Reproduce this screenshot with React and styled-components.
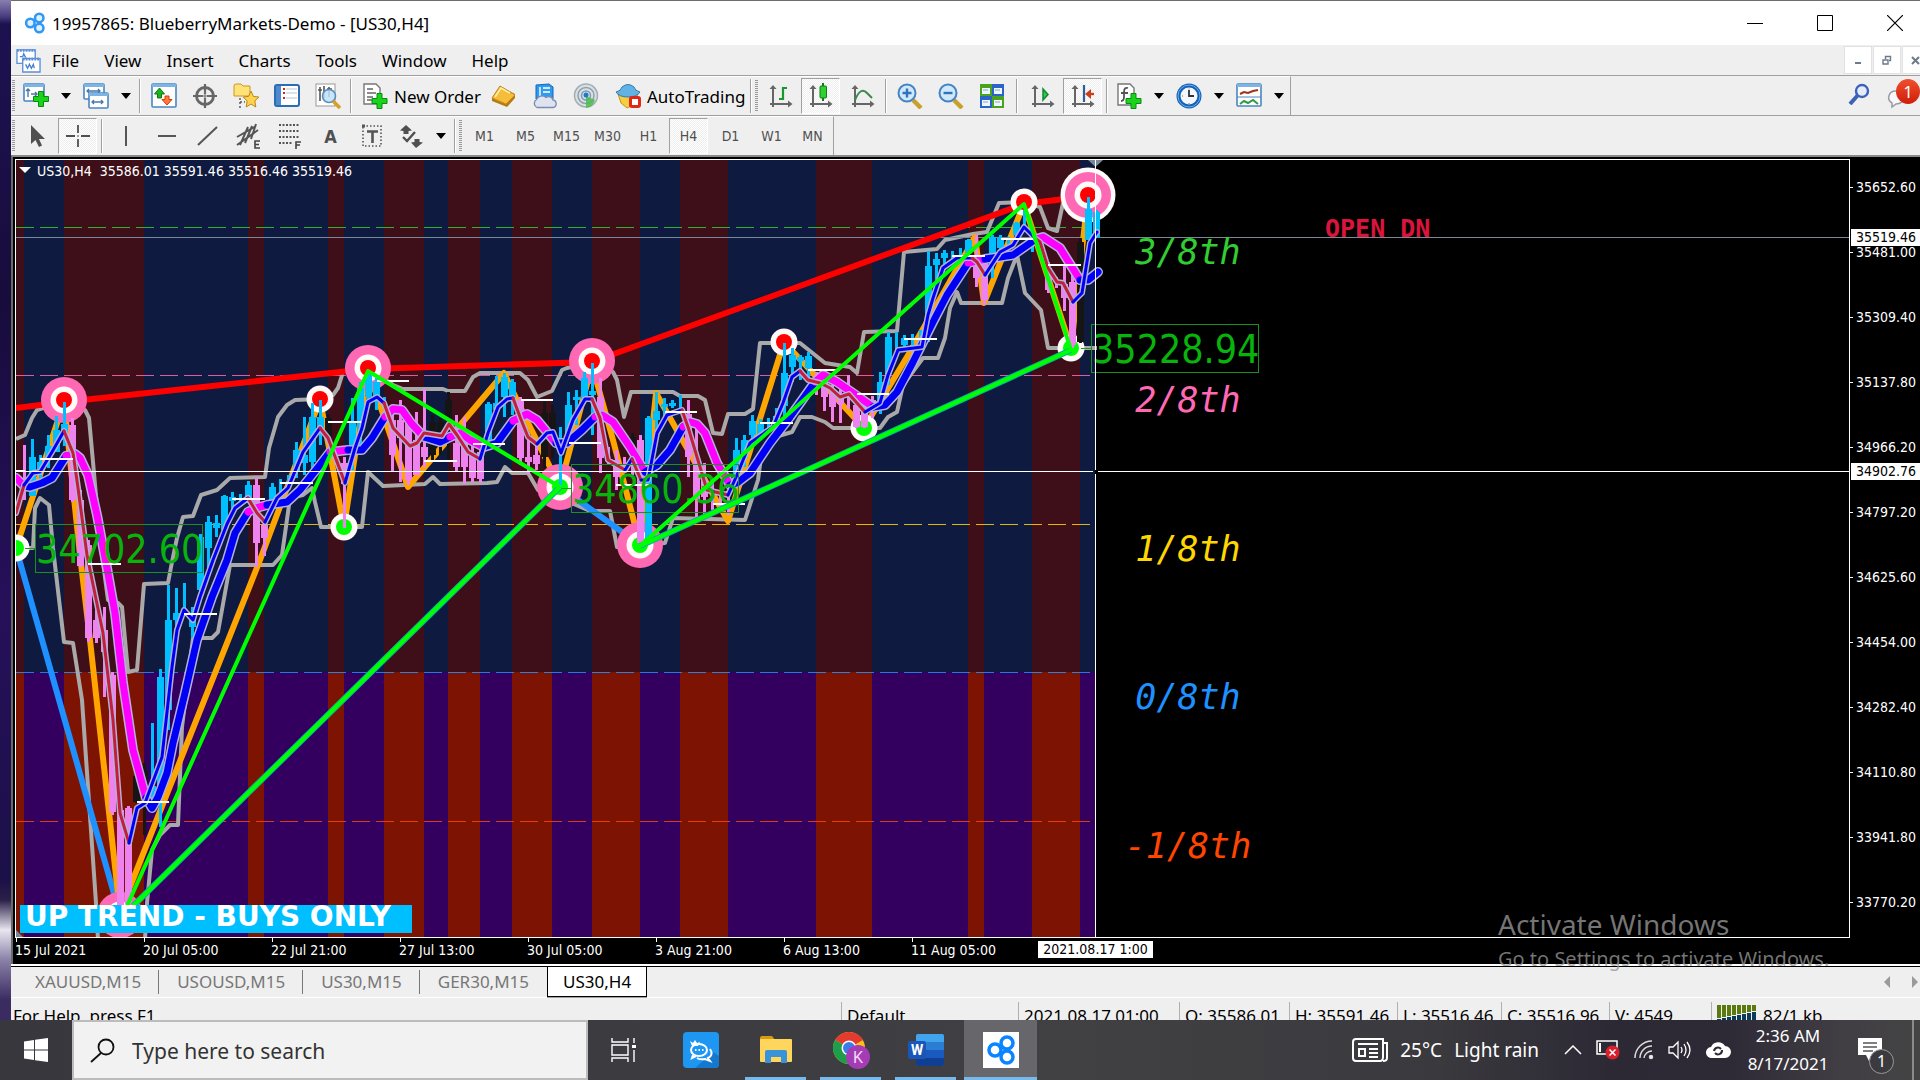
import React from "react";
import styled, { createGlobalStyle } from "styled-components";

const ui = '"Noto Sans", "Open Sans", sans-serif';
const tahoma = '"DejaVu Sans Condensed", "Noto Sans", sans-serif';

const GlobalStyle = createGlobalStyle`
  *, *::before, *::after { box-sizing: border-box; }
  body { margin: 0; overflow: hidden; background: #1d0f45; }
  button, input { font: inherit; color: inherit; border: 0; background: none; padding: 0; margin: 0; border-radius: 0; }
  ul { list-style: none; margin: 0; padding: 0; }
  svg { display: block; flex: none; }
`;

/* ---------- shell ---------- */
const Screen = styled.div`
  height: 100vh;
  display: flex;
  flex-direction: column;
  overflow: hidden;
  font-family: ${ui};
  font-size: 17px;
  color: #000;
  background: linear-gradient(#8a7fb0 0, #4a3f80 16px, #1d1250 24px, #180c3c 300px, #26105a 600px, #1c1048 880px, #2a2048 900px, #e8e6f0 930px, #8a80a8 960px, #3a2c60 1000px);
`;
const AppWindow = styled.main`
  flex: 1;
  min-height: 0;
  margin-left: 11px;
  display: flex;
  flex-direction: column;
  overflow: hidden;
  background: #efefef;
  border-top: 1px solid #6d6d6d;
  position: relative;
`;
const TitleBar = styled.header`
  height: 44px;
  flex: none;
  display: flex;
  align-items: center;
  background: #fff;
  padding-left: 13px;
  gap: 6px;
`;
const Title = styled.h1`
  flex: 1;
  margin: 0;
  font-size: 17px;
  font-weight: 400;
  white-space: nowrap;
`;
const Controls = styled.div`
  display: flex;
  margin-right: -10px;
  height: 100%;
`;
const ControlButton = styled.button`
  width: 70px;
  display: grid;
  place-items: center;
`;
const MenuBar = styled.nav`
  height: 30px;
  flex: none;
  display: flex;
  align-items: center;
  padding-left: 5px;
`;
const MenuList = styled.div`
  flex: 1;
  display: flex;
  gap: 25px;
  padding-left: 11px;
`;
const MdiButton = styled.button`
  width: 28px;
  height: 28px;
  margin-left: 1px;
  background: #fff;
  border: 1px solid #e2e2e2;
  display: grid;
  place-items: center;
`;
const MdiGroup = styled.div`
  display: flex;
  margin-right: -10px;
`;

/* ---------- toolbars ---------- */
const ToolRow = styled.div`
  height: 40px;
  flex: none;
  display: flex;
  justify-content: space-between;
  border-top: 1px solid #a0a0a0;
`;
const ToolBand = styled.div`
  display: flex;
  align-items: center;
  border-right: 1px solid #a0a0a0;
  border-top: 1px solid #fff;
`;
const Grip = styled.span`
  width: 3px;
  height: 32px;
  margin: 0 2px 0 1px;
  background: repeating-linear-gradient(#9a9a9a 0 1px, transparent 1px 2px);
`;
const Separator = styled.span`
  width: 2px;
  height: 34px;
  margin: 0 ${(p) => (p.$wide ? 4 : 2)}px;
  border-left: 1px solid #a0a0a0;
  border-right: 1px solid #fff;
`;
const ToolButton = styled.button`
  width: ${(p) => p.$w || 41}px;
  height: 36px;
  display: grid;
  place-items: center;
  font-family: ${tahoma};
  font-size: 14px;
  color: #505050;
  ${(p) =>
    p.$on &&
    `background: repeating-conic-gradient(#fff 0 25%, #eee 0 50%) 0 0 / 2px 2px;
     border: 1px solid; border-color: #a0a0a0 #fff #fff #a0a0a0;
     width: 39px; margin-right: 2px;`}
  ${(p) => p.$letter && "font-size: 18px; font-weight: 700;"}
`;
const WideButton = styled.button`
  height: 36px;
  display: flex;
  align-items: center;
  gap: 6px;
  padding: 0 3px 0 8px;
  white-space: nowrap;
`;
const CaretButton = styled.button`
  width: 22px;
  height: 36px;
  display: grid;
  place-items: center;
`;
const RightTools = styled.div`
  display: flex;
  align-items: center;
  gap: 16px;
  padding-bottom: 4px;
`;
const ChatButton = styled.button`
  position: relative;
  width: 34px;
  height: 34px;
  padding-top: 12px;
  display: flex;
  align-items: flex-start;
`;
const Badge = styled.span`
  position: absolute;
  top: 2px;
  right: 0;
  width: 24px;
  height: 25px;
  border-radius: 50%;
  background: linear-gradient(#f0502e, #cf1d08);
  color: #fff;
  font-size: 17px;
  line-height: 25px;
  text-align: center;
`;

/* ---------- chart ---------- */
const ChartArea = styled.section`
  flex: 1;
  min-height: 0;
  display: grid;
  grid-template-columns: 1fr 70px;
  grid-template-rows: 1fr 26px;
  background: #000;
  color: #fff;
  font-family: ${tahoma};
  font-size: 14px;
  border-top: 2px solid #8a8a8a;
  border-left: 2px solid #6a6a6a;
  padding: 2px 0 0 2px;
`;
const Plot = styled.div`
  border: 1px solid #fff;
  overflow: hidden;
  min-width: 0;
  min-height: 0;
`;
const PriceAxis = styled.ul`
  position: relative;
  padding-top: 19px;
  display: flex;
  flex-direction: column;
  gap: 47px;
  height: 0;
`;
const Price = styled.li`
  height: 18px;
  line-height: 18px;
  flex: none;
  display: flex;
  align-items: center;
  gap: 3px;
  &::before {
    content: "";
    width: 3px;
    height: 1px;
    background: #fff;
  }
`;
const PriceTag = styled.li`
  position: absolute;
  top: ${(p) => p.$top}px;
  left: 1px;
  right: 0;
  height: 17px;
  line-height: 17px;
  padding-left: 5px;
  background: #fff;
  color: #000;
`;
const TimeAxis = styled.ul`
  grid-column: 1 / -1;
  position: relative;
  display: flex;
`;
const Time = styled.li`
  width: 128px;
  flex: none;
  line-height: 17px;
  white-space: nowrap;
  &::before {
    content: "";
    display: block;
    margin-left: 1px;
    width: 1px;
    height: 4px;
    background: #fff;
  }
`;
const TimeTag = styled.li`
  position: absolute;
  left: 1023px;
  top: 3px;
  width: 115px;
  height: 17px;
  line-height: 17px;
  text-align: center;
  white-space: nowrap;
  background: #fff;
  color: #000;
`;

/* ---------- tabs, status ---------- */
const Tabs = styled.div`
  flex: none;
  height: 34px;
  border-top: 2px solid #fff;
  border-bottom: 1px solid #fff;
  display: flex;
  justify-content: space-between;
`;
const TabList = styled.div`
  flex: 1;
  border-top: 1px solid #000;
  display: flex;
  align-items: flex-start;
  padding-left: 6px;
`;
const Tab = styled.button`
  height: 30px;
  padding: 0 18px 2px;
  color: ${(p) => (p.$on ? "#000" : "#777")};
  white-space: nowrap;
  position: relative;
  ${(p) => p.$on && "background: #fff; border: 1px solid #000; border-top: 0; padding: 0 15px 1px; box-shadow: 0 1px 0 #a0a0a0;"}
  &::after {
    content: "";
    position: absolute;
    right: 0;
    top: 3px;
    height: 24px;
    width: ${(p) => (p.$line ? 1 : 0)}px;
    background: #777;
  }
`;
const TabArrows = styled.div`
  border-top: 1px solid #000;
  display: flex;
  align-items: center;
  gap: 22px;
  padding-right: 2px;
`;
const StatusBar = styled.footer`
  flex: none;
  height: 36px;
  display: flex;
  padding-top: 4px;
`;
const Status = styled.div`
  width: ${(p) => p.$w || 108}px;
  ${(p) => p.$grow && "flex: 1 1 0;"}
  line-height: 28px;
  height: 30px;
  padding-left: ${(p) => (p.$grow ? 2 : 5)}px;
  border-left: ${(p) => (p.$grow ? 0 : 1)}px solid #b0b0b0;
  white-space: nowrap;
  display: flex;
  gap: 7px;
`;
const Watermark = styled.div`
  position: absolute;
  right: 80px;
  bottom: 60px;
  width: 342px;
  color: rgba(150, 150, 150, 0.78);
  font-size: 20px;
  line-height: 30px;
  pointer-events: none;
  white-space: nowrap;
`;
const WatermarkTitle = styled.div`
  font-size: 28px;
  line-height: 40px;
`;

/* ---------- taskbar: stays above the window that runs under it ---------- */
const Taskbar = styled.footer`
  flex: none;
  height: 60px;
  margin-top: -14px;
  z-index: 1;
  display: flex;
  align-items: center;
  background: linear-gradient(90deg, #38373d 0, #3d3c41 40%, #414043 56%, #3a393d 75%, #2c2935 84%, #2d2a36 90%, #413e44 96%, #444);
  color: #fff;
`;
const StartButton = styled.button`
  width: 72px;
  height: 100%;
  display: grid;
  place-items: center;
`;
const SearchBox = styled.label`
  width: 516px;
  height: 100%;
  display: flex;
  align-items: center;
  gap: 17px;
  padding-left: 16px;
  background: #f2f2f2;
  border: 2px solid #bcbcbc;
`;
const SearchInput = styled.input`
  flex: 1;
  min-width: 0;
  padding-top: 2px;
  font-size: 21px;
  outline: 0;
  &::placeholder { color: #333; opacity: 1; }
`;
const TaskView = styled.button`
  width: 68px;
  height: 100%;
  padding-left: 4px;
  display: grid;
  place-items: center;
`;
const AppButton = styled.button`
  width: ${(p) => (p.$on ? 73 : 61)}px;
  height: 100%;
  margin-left: ${(p) => (p.$on ? 8 : 14)}px;
  display: grid;
  place-items: center;
  background: ${(p) => (p.$on ? "#67666a" : "none")};
  border-bottom: 3px solid ${(p) => (p.$open ? "#76b9ed" : "transparent")};
  border-top: 3px solid ${(p) => (p.$on ? "#67666a" : "transparent")};
`;
const Tray = styled.div`
  margin-left: auto;
  height: 100%;
  display: flex;
  align-items: center;
  border-right: 2px solid #8a898c;
  margin-right: 6px;
`;
const Weather = styled.button`
  display: flex;
  align-items: center;
  gap: 12px;
  font-size: 19px;
  white-space: nowrap;
  margin-right: 25px;
`;
const TrayIcons = styled.div`
  display: flex;
  align-items: center;
  gap: 14px;
`;
const Clock = styled.div`
  width: 114px;
  text-align: center;
  line-height: 28px;
`;
const ActionCenter = styled.button`
  position: relative;
  width: 67px;
  height: 60px;
  padding: 18px 0 0 13px;
  display: flex;
  align-items: flex-start;
`;
const ActionCount = styled.span`
  position: absolute;
  left: 24px;
  top: 29px;
  width: 25px;
  height: 25px;
  border-radius: 50%;
  border: 1px solid #999;
  background: #3b3a3e;
  font-size: 16px;
  line-height: 23px;
  text-align: center;
`;

/* ---------- icons ---------- */
const Icon = ({ s = 26, children }) => (
  <svg width={s} height={s} viewBox="0 0 26 26" fill="none" aria-hidden="true">
    {children}
  </svg>
);
const Plus = ({ x = 0, y = 0 }) => (
  <path
    transform={`translate(${x} ${y})`}
    d="M5 0h5v5h5v5h-5v5H5v-5H0V5h5z"
    fill="#19d419"
    stroke="#0a8a14"
  />
);
const Berry = ({ s, color = "#0a84ff" }) => (
  <Icon s={s}>
    <g stroke={color} strokeWidth="3">
      <circle cx="7.500" cy="13" r="5" fill="#dff0ff" />
      <circle cx="18" cy="7" r="5" fill="#dff0ff" />
      <circle cx="18" cy="19" r="5" fill="#dff0ff" />
    </g>
  </Icon>
);
const Caret = () => (
  <svg width="10" height="6" aria-hidden="true">
    <path d="M0 0h10L5 6z" fill="#000" />
  </svg>
);
const Axes = () => (
  <g>
    <path d="M5 5v19M2 21h19" stroke="#666" strokeWidth="2" />
    <path d="M1.500 6L5 2l3.500 4zM20 17.500l4.500 3.500-4.500 3.500z" fill="#666" />
  </g>
);
const Frame = ({ x = 0, y = 0, w = 20, h = 17, f = "#fff" }) => (
  <g>
    <rect x={x + 1} y={y + 1} width={w} height={h} rx="1" fill={f} stroke="#4a86c0" strokeWidth="1.6" />
    <rect x={x + 1} y={y + 1} width={w} height="3" fill="#7db4e6" />
  </g>
);

const icons = {
  newChart: (
    <Icon>
      <Frame />
      <path d="M5 6v8M3 8l2-2 2 2M8 11h6M12 9l2 2-2 2" stroke="#4a77a8" strokeWidth="1.4" />
      <Plus x={10.5} y={8.5} />
    </Icon>
  ),
  profiles: (
    <Icon>
      <Frame w={20} h={15} />
      <path d="M4 8h13M6 6L4 8l2 2M15 6l2 2-2 2" stroke="#4a77a8" strokeWidth="1.3" />
      <Frame x={5} y={9} w={19} h={15} />
      <path d="M9 19h11M11 17l-2 2 2 2M18 17l2 2-2 2" stroke="#4a77a8" strokeWidth="1.3" />
    </Icon>
  ),
  market: (
    <Icon>
      <Frame w={24} h={23} />
      <path d="M8.500 5l5 6h-3v4h-4v-4h-3z" fill="#1db31d" stroke="#0c7a12" />
      <path d="M16 22l5-5.500h-3V13h-4v3.500h-3z" fill="#ff7b3a" stroke="#d23c08" />
    </Icon>
  ),
  target: (
    <Icon>
      <circle cx="13" cy="13" r="8.500" stroke="#666" strokeWidth="2.800" />
      <path d="M13 1v10M13 15v10M1 13h10M15 13h10" stroke="#666" strokeWidth="2.200" />
      <path d="M13 8v10M8 13h10" stroke="#777" strokeWidth="1.200" />
    </Icon>
  ),
  navigator: (
    <Icon>
      <path d="M1 3q0-2 2-2h5l2 2h7v10H1z" fill="#ffe27a" stroke="#c79a1d" />
      <path d="M7 15v10M7 19h5" stroke="#555" strokeDasharray="2 2" strokeWidth="1.4" />
      <path d="M18 8l2.400 5.400 5.400.6-4 4 1 6-4.800-3-4.800 3 1-6-4-4 5.400-.6z" fill="#ffd34d" stroke="#b9861a" />
    </Icon>
  ),
  data: (
    <Icon>
      <rect x="1" y="2" width="24" height="21" rx="2" fill="#fff" stroke="#2c6cb5" strokeWidth="2" />
      <path d="M2 3h5v19H2z" fill="#4c8bd0" />
      <path d="M9 6h2M9 10h2M9 15h2" stroke="#e02020" strokeWidth="2" />
      <path d="M12 6h11M12 10h11M12 15h11" stroke="#b8c4d4" strokeWidth="1" />
    </Icon>
  ),
  tester: (
    <Icon>
      <rect x="1" y="1" width="19" height="22" fill="#fff" stroke="#999" />
      <path d="M5 4v14M9 3v12M14 4v10M3 7h4M12 6h5" stroke="#555" strokeWidth="1.600" />
      <circle cx="14" cy="13" r="6.500" fill="#bfe0f8" fillOpacity=".85" stroke="#5b8fc0" strokeWidth="1.600" />
      <path d="M18 18l7 7" stroke="#d8a023" strokeWidth="3.500" />
    </Icon>
  ),
  order: (
    <Icon>
      <path d="M2 1h12l4 4v16H2z" fill="#fff" stroke="#777" strokeWidth="1.400" />
      <path d="M5 6h6M5 10h9M5 14h6M5 17h5" stroke="#666" strokeWidth="1.500" />
      <Plus x={10} y={10.5} />
    </Icon>
  ),
  book: (
    <Icon>
      <path d="M1 15L9 3l15 8v4l-8 9L1 18z" fill="#b67a10" />
      <path d="M1 15L9 3l15 9-9 9z" fill="#f5bd3a" stroke="#c48a1c" />
      <path d="M4 14l6-9 9 5" stroke="#fff0b0" strokeWidth="1.500" />
    </Icon>
  ),
  vps: (
    <Icon>
      <path d="M4 2l13-1 4 3v12H4z" fill="#2f9bee" stroke="#1565b8" />
      <path d="M8 4v10M11 5h7M11 9h7" stroke="#cfe9ff" strokeWidth="1.800" />
      <path d="M5 24.500a4.500 4.500 0 0 1-.5-8 6 6 0 0 1 9.500-2 4.500 4.500 0 0 1 7 2.500 3.800 3.800 0 0 1 0 7.500z" fill="#dde3ef" stroke="#7b8bb0" strokeWidth="1.300" />
    </Icon>
  ),
  signal: (
    <Icon>
      <circle cx="13" cy="12.500" r="11.500" fill="#d8e0e4" stroke="#a2adb4" strokeWidth="1.500" />
      <circle cx="13" cy="12.500" r="8" stroke="#8ea0ac" strokeWidth="1.500" />
      <circle cx="13" cy="12.500" r="4.500" stroke="#7e9bb5" strokeWidth="1.500" />
      <path d="M13 13v12q7-1 9-8z" fill="#4dbb4d" fillOpacity=".85" />
      <circle cx="13" cy="12" r="2.500" fill="#2577c8" />
    </Icon>
  ),
  auto: (
    <Icon>
      <path d="M3 11h20l-5 11-6 3-6-5z" fill="#f5cf3f" stroke="#c2951a" />
      <path d="M1 9q5-1 6-5 6-5 12 0 1 4 6 5-3 5-12 5T1 9z" fill="#63b2e4" stroke="#2f7ab0" />
      <rect x="14" y="13" width="12" height="12" rx="3" fill="#e02818" />
      <rect x="17" y="16" width="6" height="6" fill="#fff" />
    </Icon>
  ),
  bars: (
    <Icon>
      <Axes />
      <path d="M15 4v13M15 5h4M11 16h4" stroke="#18982f" strokeWidth="2.200" />
    </Icon>
  ),
  candles: (
    <Icon>
      <Axes />
      <path d="M15 0v18" stroke="#107a1d" strokeWidth="2" />
      <rect x="12" y="3" width="6.500" height="12" rx="1" fill="#2fd12f" stroke="#107a1d" />
    </Icon>
  ),
  line: (
    <Icon>
      <Axes />
      <path d="M5 17q6-14 12-7l5 5" stroke="#3c8a4e" strokeWidth="2" />
    </Icon>
  ),
  zoomIn: (
    <Icon>
      <path d="M16 17l8 8" stroke="#caa02a" strokeWidth="4.500" />
      <circle cx="10" cy="10" r="8.500" fill="#cfe9fb" stroke="#4584c4" strokeWidth="2" />
      <path d="M5.500 10h9M10 5.500v9" stroke="#3272b8" strokeWidth="2.400" />
    </Icon>
  ),
  zoomOut: (
    <Icon>
      <path d="M16 17l8 8" stroke="#caa02a" strokeWidth="4.500" />
      <circle cx="10" cy="10" r="8.500" fill="#cfe9fb" stroke="#4584c4" strokeWidth="2" />
      <path d="M5.500 10h9" stroke="#3272b8" strokeWidth="2.400" />
    </Icon>
  ),
  tile: (
    <Icon>
      <path d="M1 1h12v12H1zM13 13h12v12H13z" fill="#4aa31c" />
      <path d="M13 1h12v12H13zM1 13h12v12H1z" fill="#2b63c8" />
      <path d="M3 5h8v6H3zM15 5h8v6h-8zM3 17h8v6H3zM15 17h8v6h-8z" fill="#eef6ff" />
      <path d="M4 7h5M16 7h5M4 19h5M16 19h5" stroke="#8ab" />
    </Icon>
  ),
  scroll: (
    <Icon>
      <Axes />
      <path d="M13 6v11l5-5.500z" fill="#35c651" stroke="#0e8a33" strokeWidth="1.500" />
    </Icon>
  ),
  shift: (
    <Icon>
      <Axes />
      <path d="M14 2v17" stroke="#2a5f9a" strokeWidth="2.200" />
      <path d="M24 11h-5" stroke="#c8401a" strokeWidth="2.400" />
      <path d="M21 6v10l-6-5z" fill="#c8401a" />
    </Icon>
  ),
  indicators: (
    <Icon>
      <path d="M2 1h12l4 4v17H2z" fill="#fff" stroke="#777" strokeWidth="1.400" />
      <path d="M12 5q-4-1-4 4v5q0 4-3 4M5 10h7" stroke="#555" strokeWidth="1.800" />
      <Plus x={10} y={10.5} />
    </Icon>
  ),
  clock: (
    <Icon>
      <circle cx="13" cy="13" r="12.500" fill="#1560b8" />
      <circle cx="13" cy="13" r="11" stroke="#6ab2f0" />
      <circle cx="13" cy="13" r="8.500" fill="#f4f8fc" />
      <path d="M13 7v6h5" stroke="#333" strokeWidth="1.800" />
      <path d="M13 5.500v1M13 20v1M6 13h1" stroke="#777" />
    </Icon>
  ),
  template: (
    <Icon>
      <Frame w={24} h={22} />
      <path d="M1 14h24" stroke="#4a86c0" />
      <path d="M4 11l4-2 4 1 5-2 5-1" stroke="#a03418" strokeWidth="2" />
      <path d="M4 21l4-3 4 2 5-3 5 4" stroke="#2f9a44" strokeWidth="2" />
    </Icon>
  ),
  cursor: (
    <Icon>
      <path d="M6 2v19l4.500-4 3.500 7 3-1.500-3-6.500h6z" fill="#4f4f4f" />
    </Icon>
  ),
  cross: (
    <Icon>
      <path d="M13 2v8M13 16v8M1 13h9M16 13h9M12.500 13h1" stroke="#4f4f4f" strokeWidth="1.800" />
    </Icon>
  ),
  vline: (
    <Icon>
      <path d="M13 3v20" stroke="#555" strokeWidth="2" />
    </Icon>
  ),
  hline: (
    <Icon>
      <path d="M4 13h18" stroke="#555" strokeWidth="2" />
    </Icon>
  ),
  trend: (
    <Icon>
      <path d="M3 22L22 4" stroke="#555" strokeWidth="2" />
    </Icon>
  ),
  channel: (
    <Icon>
      <path d="M1 14L20 3M1 22L22 7M4 22L12 4M9 20l7-17M15 16l5-15" stroke="#555" strokeWidth="2" />
      <path d="M24 18h-5v7h5M19 21.500h4" stroke="#444" strokeWidth="1.600" />
    </Icon>
  ),
  fibo: (
    <Icon>
      <path d="M2 2h21M2 8h21M2 14h21M2 20h13" stroke="#555" strokeWidth="1.800" strokeDasharray="2 1.500" />
      <path d="M24 19h-5v7M19 22h4" stroke="#444" strokeWidth="1.600" />
    </Icon>
  ),
  box: (
    <Icon>
      <rect x="4" y="3" width="18" height="20" stroke="#555" strokeDasharray="1.500 2" strokeWidth="1.600" />
      <path d="M3 1.500h3v3H3z" fill="#555" />
      <path d="M8 8.500h11M13.500 8v12" stroke="#555" strokeWidth="2.600" />
    </Icon>
  ),
  arrows: (
    <Icon>
      <path d="M8 2l6 5.500-3.500.5v3h-5V8L2 7.500zM18 25l7-5.500-3.500-.5v-3h-5v3L13 19.500z" fill="#4f4f4f" />
      <path d="M5 14l4 4 8-9" stroke="#4f4f4f" strokeWidth="2.400" />
    </Icon>
  ),
};

/* ---------- chart data ---------- */
const bearBands = [
  [16, 24], [64, 144], [248, 264], [328, 344], [384, 424], [448, 480], [512, 552],
  [592, 640], [680, 728], [816, 872], [968, 984], [1032, 1080],
];
const levels = [
  [227, "3/8th", "#32cd32", 264],
  [375, "2/8th", "#ff69b4", 412],
  [524, "1/8th", "#ffd700", 561],
  [672, "0/8th", "#1e90ff", 709],
  [821, "-1/8th", "#ff4500", 858],
];
const upper =
  "16,439 25,435 32,418 37,410 64,401 85,410 89,418 93,462 100,540 108,600 118,603 122,607 128,672 137,670 144,584 168,583 172,562 177,538 183,517 193,516 201,495 217,490 230,478 265,477 269,448 278,417 287,405 295,400 320,399 333,395 338,388 343,372 368,368 393,385 403,389 443,389 448,391 465,391 473,377 480,373 520,373 528,380 537,397 552,391 562,370 567,368 592,362 613,372 617,380 624,417 631,392 673,392 680,396 698,396 705,400 713,433 722,434 728,414 745,414 753,409 760,343 800,343 825,363 850,367 857,373 864,332 897,331 904,252 937,249 945,240 973,234 987,232 999,203 1024,202 1040,207 1048,228 1057,231 1063,203 1088,196";
const lower =
  "16,548 33,548 35,508 40,498 49,505 53,548 64,642 73,643 82,700 96,903 98,940 145,940 147,903 152,850 160,835 170,825 178,825 182,727 193,638 212,638 218,632 230,565 273,565 282,555 290,498 303,495 312,488 315,502 321,527 362,527 368,472 383,486 425,484 433,477 440,484 487,483 497,482 505,467 512,473 528,473 538,490 560,498 590,511 610,511 617,547 640,545 665,543 673,518 745,520 758,480 762,450 775,437 792,432 800,417 812,417 825,422 833,428 880,428 888,417 897,412 903,385 923,358 938,358 945,338 950,308 957,292 961,303 1002,303 1008,278 1017,255 1025,293 1041,310 1048,348 1097,348";
const zigzag =
  "16,548 64,402 80,555 90,640 120,912 260,560 320,400 344,527 368,370 408,487 504,373 528,423 560,487 592,365 613,440 640,545 656,393 728,521 784,342 864,428 910,352 975,237 984,303 1024,204 1071,348 1088,196";

const slowMa = [
  ["m", "16,478 24,486"],
  ["b", "30,487 42,483 52,478 66,456"],
  ["m", "75,454 80,458 88,475 97,515 107,568 115,613 123,683 133,750 146,798"],
  ["b", "152,808 158,797 167,773 173,743 185,693 197,640 212,597 227,560 235,533 248,512"],
  ["m", "256,508 267,505"],
  ["b", "287,502 300,490 320,465 330,452"],
  ["m", "348,450"],
  ["b", "362,450 372,438 385,417"],
  ["m", "393,409 402,410 411,423 424,437"],
  ["b", "440,442 450,437"],
  ["m", "460,433 470,440 484,447"],
  ["b", "497,443 513,421"],
  ["m", "527,414 537,420 556,443"],
  ["b", "567,443 582,430 595,417"],
  ["m", "602,415 613,422 630,447 645,472"],
  ["b", "657,465 670,450 683,427"],
  ["m", "690,422 697,424 705,433 717,463 730,485"],
  ["b", "737,483 750,473 770,443 790,417 815,382"],
  ["m", "823,375 837,382 853,393 873,407"],
  ["b", "885,405 897,392 913,362 933,322 947,295 968,263"],
  ["m", "985,259"],
  ["b", "1000,257 1013,255 1036,239"],
  ["m", "1043,237 1060,248 1080,280"],
  ["b", "1088,280 1098,272"],
];
const fastMa = [
  ["c", "16,513 24,485"],
  ["b", "33,473 40,472 52,452 64,431"],
  ["c", "73,453 78,488 87,555 90,570 103,633 113,720 120,813 129,843"],
  ["b", "137,808 145,803 162,757 172,667 177,630 184,610 193,620 200,597 213,560 227,524 235,508 248,498"],
  ["c", "257,513 265,522"],
  ["b", "277,498 288,488 303,452 320,428"],
  ["c", "328,438 345,483"],
  ["b", "355,448 362,428 368,402 377,397 384,403"],
  ["c", "393,428 410,446 417,443 424,433 442,436 449,424 457,435 468,452 480,459"],
  ["b", "488,433 498,407 507,399 513,398"],
  ["c", "520,417 528,437 537,444"],
  ["b", "547,433 553,432 561,453 573,420 585,399 592,399"],
  ["c", "600,418 608,460 625,470"],
  ["b", "632,459"],
  ["c", "641,480"],
  ["b", "648,480 657,433 667,415 682,410"],
  ["c", "688,427 697,457 707,490 728,495"],
  ["b", "737,475 750,443 773,427 783,403 792,377 800,371"],
  ["c", "808,380 820,383 830,388 840,397 849,394 865,412"],
  ["b", "880,403 888,375 898,350 922,347 928,315 933,298 943,268 957,258 972,258"],
  ["c", "977,262 985,275"],
  ["b", "1000,252 1013,245 1024,227 1035,238"],
  ["c", "1040,242 1048,268 1057,282 1063,283 1073,302"],
  ["b", "1082,293 1090,243 1097,232"],
];

/* centre x, high, low, body top, body bottom */
const bull = [
  [32, 439, 490, 457, 496], [40, 455, 480, 462, 470], [48, 435, 468, 446, 460], [56, 416, 452, 430, 452],
  [64, 402, 446, 424, 440], [152, 723, 800, 786, 798], [160, 669, 827, 677, 785], [168, 585, 730, 620, 710],
  [176, 588, 630, 613, 620], [184, 583, 612, 0, 0], [192, 607, 638, 620, 627], [200, 534, 598, 537, 590],
  [208, 516, 570, 522, 548], [216, 515, 537, 523, 528], [224, 495, 532, 496, 530], [232, 492, 510, 497, 501],
  [240, 494, 506, 0, 0], [248, 481, 500, 485, 498], [272, 483, 502, 487, 500], [280, 479, 495, 0, 0],
  [288, 475, 490, 0, 0], [296, 442, 478, 450, 472], [304, 417, 475, 455, 463], [312, 403, 475, 417, 462],
  [320, 400, 445, 417, 430], [352, 398, 470, 423, 445], [360, 382, 455, 388, 432], [368, 370, 403, 375, 397],
  [376, 378, 410, 382, 402], [384, 397, 410, 0, 0], [488, 402, 450, 404, 448], [496, 376, 412, 403, 410],
  [504, 373, 417, 377, 397], [512, 379, 415, 382, 397], [560, 427, 486, 0, 0], [568, 392, 440, 405, 433],
  [576, 390, 425, 397, 400], [584, 372, 404, 378, 400], [592, 363, 435, 391, 395], [648, 416, 541, 418, 540],
  [656, 392, 433, 411, 420], [664, 398, 416, 404, 407], [672, 400, 408, 403, 406], [680, 395, 414, 0, 0],
  [736, 438, 485, 450, 474], [744, 435, 467, 440, 458], [752, 415, 440, 421, 435], [760, 419, 440, 424, 434],
  [768, 418, 433, 0, 0], [776, 408, 430, 416, 424], [784, 343, 427, 373, 406], [792, 348, 382, 355, 367],
  [800, 355, 380, 357, 361], [808, 352, 380, 356, 368], [880, 372, 414, 382, 402], [888, 332, 385, 337, 374],
  [896, 332, 352, 0, 0], [904, 335, 350, 338, 345], [912, 334, 348, 0, 0], [920, 330, 345, 0, 0],
  [928, 251, 342, 266, 326], [936, 253, 288, 259, 265], [944, 250, 265, 253, 258], [952, 251, 262, 0, 0],
  [960, 248, 260, 0, 0], [968, 239, 262, 240, 253], [992, 235, 278, 237, 260], [1000, 235, 252, 238, 248],
  [1008, 237, 247, 0, 0], [1016, 222, 242, 223, 235], [1024, 210, 232, 0, 0], [1032, 235, 252, 0, 0],
  [1088, 197, 240, 209, 240], [1096, 210, 238, 212, 238],
];
const bear = [
  [24, 445, 500, 0, 0], [72, 418, 502, 425, 500], [80, 490, 567, 500, 566], [88, 540, 642, 545, 638],
  [96, 610, 643, 620, 638], [104, 607, 697, 630, 652], [112, 672, 815, 675, 812], [120, 806, 912, 810, 912],
  [128, 806, 905, 808, 904], [256, 478, 567, 485, 543], [264, 522, 556, 525, 538], [344, 457, 528, 463, 484],
  [392, 412, 472, 420, 455], [400, 400, 482, 420, 438], [408, 418, 485, 422, 480], [416, 412, 475, 440, 475],
  [424, 389, 467, 447, 457], [456, 415, 472, 443, 467], [464, 417, 484, 443, 467], [472, 433, 482, 453, 478],
  [480, 447, 483, 452, 479], [520, 397, 465, 400, 458], [528, 433, 474, 457, 462], [536, 440, 470, 455, 464],
  [600, 378, 473, 397, 458], [608, 447, 465, 0, 0], [616, 450, 490, 460, 477], [624, 457, 473, 0, 0],
  [632, 455, 475, 0, 0], [640, 435, 544, 440, 543], [688, 400, 477, 414, 457], [696, 428, 519, 457, 500],
  [704, 463, 517, 480, 497], [712, 480, 510, 0, 0], [720, 490, 510, 0, 0], [728, 490, 515, 0, 0],
  [816, 372, 395, 376, 388], [824, 372, 411, 377, 397], [832, 385, 422, 392, 407], [840, 388, 423, 398, 404],
  [848, 375, 409, 0, 0], [856, 400, 428, 405, 427], [864, 396, 428, 398, 427], [872, 396, 418, 400, 406],
  [976, 235, 287, 265, 278], [984, 258, 305, 262, 300], [1048, 262, 293, 268, 290], [1056, 277, 288, 0, 0],
  [1064, 265, 311, 284, 298], [1072, 274, 348, 282, 345],
];
const doji = [
  [136, 773, 803, 776, 802], [144, 763, 835, 770, 800], [328, 415, 440, 418, 438], [432, 415, 460, 422, 455],
  [440, 418, 455, 422, 445], [448, 392, 460, 400, 428], [544, 400, 468, 413, 457], [552, 405, 458, 413, 433],
  [632, 433, 455, 437, 455], [1080, 238, 343, 242, 342],
];
const pivots = [
  [16, 25, 470], [40, 73, 458], [88, 121, 563], [137, 169, 801], [184, 217, 613], [232, 265, 498],
  [280, 313, 482], [328, 361, 421], [377, 409, 380], [424, 457, 460], [473, 505, 443], [521, 553, 399],
  [569, 601, 442], [616, 649, 484], [665, 697, 411], [713, 745, 503], [760, 793, 422], [808, 840, 369],
  [857, 889, 393], [904, 937, 338], [952, 985, 255], [1001, 1033, 238], [1048, 1081, 264],
];
const marks = [
  [64, 400, "r", 1], [368, 368, "r", 1], [592, 361, "r", 1], [1088, 195, "r", 2], [560, 487, "g", 1],
  [640, 545, "g", 1], [120, 915, "g", 1], [320, 399, "r"], [784, 342, "r"], [1024, 202, "r"],
  [344, 527, "g"], [864, 428, "g"], [1071, 348, "g"], [16, 548, "g"],
];
const priceBoxes = [
  [35, 524, "34702.60"],
  [571, 464, "34860.36"],
  [1091, 324, "35228.94"],
];
const tones = { m: "#ff00ff", b: "#0000f5", c: "#c41e3a" };

const joined = (segments) => {
  let last = "";
  return segments.map(([tone, pts]) => {
    const points = `${last} ${pts}`;
    last = pts.split(" ").pop();
    return { tone, points };
  });
};

const MovingAverage = ({ segments, width }) => (
  <g fill="none" strokeLinejoin="round" strokeLinecap="round">
    <polyline points={segments.map((s) => s[1]).join(" ")} stroke="#b4b0dc" strokeWidth={width + 3} />
    {joined(segments).map((s, i) => (
      <polyline key={i} points={s.points} stroke={tones[s.tone]} strokeWidth={width} />
    ))}
  </g>
);

const Candles = ({ data, color }) => (
  <g fill={color}>
    {data.map(([x, hi, lo, top, bottom]) => (
      <React.Fragment key={x}>
        <rect x={x - 1} y={hi} width="3" height={lo - hi} />
        {bottom > 0 && <rect x={x - 3} y={top} width="7" height={bottom - top} />}
      </React.Fragment>
    ))}
  </g>
);

const PriceChart = () => (
  <svg width="100%" height="777" role="img" aria-label="US30 H4 price chart">
    <g transform="translate(-16 -160)">
      <g shapeRendering="crispEdges">
        <rect x="16" y="160" width="1079" height="512" fill="#0e1a3f" />
        <rect x="16" y="672" width="1079" height="270" fill="#33005f" />
        {bearBands.map(([a, b]) => (
          <g key={a}>
            <rect x={a} y="160" width={b - a} height="512" fill="#3f0f19" />
            <rect x={a} y="672" width={b - a} height="270" fill="#7d1303" />
          </g>
        ))}
        {levels.map(([y, , c]) => (
          <path key={y} d={`M16 ${y}.5H1090`} stroke={c} strokeOpacity=".85" strokeDasharray="18 6" />
        ))}
      </g>
      <path d="M1088 160h15l-7.500 7z" fill="#778899" />
      <path d="M16 930v8h8z" fill="#778899" />

      <g fill="none" strokeLinejoin="round">
        <polyline points={upper} stroke="#a9a9a9" strokeWidth="4" />
        <polyline points={lower} stroke="#a9a9a9" strokeWidth="4" />
        <path d="M16 237.500H2400" stroke="#778899" />
        <polyline points="16,408 64,402 368,369 592,362 1024,204 1088,196" stroke="#f00" strokeWidth="6" />
        <path d="M16 548L120 915M560 487L640 545" stroke="#1e90ff" strokeWidth="6" />
        <polyline points={zigzag} stroke="#ffa500" strokeWidth="6" />
      </g>

      {marks.map(([x, y, tone, halo]) => (
        <g key={x}>
          {halo === 2 && <circle cx={x} cy={y} r="27.500" fill="#fffafa" />}
          {halo && <circle cx={x} cy={y} r="23" fill="#ff69b4" />}
          <circle cx={x} cy={y} r="13.500" fill="#fffafa" />
          <circle cx={x} cy={y} r="8" fill={tone === "r" ? "#f00" : "#0f0"} />
        </g>
      ))}

      <g shapeRendering="crispEdges">
        <Candles data={doji} color="#151515" />
        <Candles data={bull} color="#00bfff" />
        <Candles data={bear} color="#ee82ee" />
      </g>

      <MovingAverage segments={slowMa} width={7} />
      <MovingAverage segments={fastMa} width={3} />
      <g fill="#fff">
        {pivots.map(([a, b, y]) => (
          <rect key={a} x={a} y={y} width={b - a} height="2" />
        ))}
      </g>

      {priceBoxes.map(([x, y, label]) => (
        <g key={label}>
          <path d={`M${x - 10} ${y + 24.5}h10`} stroke="#1c9a1c" />
          <rect x={x + 0.5} y={y + 0.5} width="167" height="48" fill="none" stroke="#1c8f22" />
          <text x={x + 1} y={y + 39} fontSize="39" fontFamily={tahoma} fill="#08b30c">
            {label}
          </text>
        </g>
      ))}

      <g fill="none">
        <path d="M133 906L560 487M640 546L1071 350" stroke="#00b894" strokeWidth="6" />
        <path d="M133 906L560 487M640 546L1071 350" stroke="#0f0" strokeWidth="4" />
        <path d="M127 906L368 371L560 487M640 546L1024 204L1071 350" stroke="#0f0" strokeWidth="4" strokeLinejoin="round" />
      </g>
      <path d="M16 471.500H1093M1098 471.500H2400M1095.500 160V470M1095.500 474V942" stroke="#fff" />

      <path d="M19 167h12l-6 6z" fill="#fff" />
      <text x="37" y="176" fontSize="14" fontFamily={tahoma} fill="#fff">
        {"US30,H4\u00a0 35586.01 35591.46 35516.46 35519.46"}
      </text>
      {levels.map(([, label, fill, y]) => (
        <text
          key={label}
          x="1188"
          y={y}
          fontSize="35"
          fontStyle="italic"
          textAnchor="middle"
          fontFamily='"DejaVu Sans Mono", monospace'
          fill={fill}
        >
          {label}
        </text>
      ))}
      <text x="1325" y="237" fontSize="25" fontWeight="700" fontFamily='"DejaVu Sans Mono", monospace' fill="#dc143c">
        OPEN DN
      </text>
      <rect x="20" y="905" width="392" height="28" fill="#00bfff" />
      <text x="25" y="926" fontSize="28" fontWeight="700" fontFamily='"DejaVu Sans", sans-serif' fill="#fff">
        UP TREND - BUYS ONLY
      </text>
    </g>
  </svg>
);

const prices = [
  "35652.60", "35481.00", "35309.40", "35137.80", "34966.20", "34797.20",
  "34625.60", "34454.00", "34282.40", "34110.80", "33941.80", "33770.20",
];
const times = [
  "15 Jul 2021", "20 Jul 05:00", "22 Jul 21:00", "27 Jul 13:00",
  "30 Jul 05:00", "3 Aug 21:00", "6 Aug 13:00", "11 Aug 05:00",
];

const Tool = ({ icon, ...rest }) => (
  <ToolButton aria-label={icon} {...rest}>
    {icons[icon]}
  </ToolButton>
);
const DropTool = ({ icon }) => (
  <>
    <Tool icon={icon} $w={38} />
    <CaretButton aria-label={`${icon} menu`}>
      <Caret />
    </CaretButton>
  </>
);

export default function App() {
  return (
    <Screen>
      <GlobalStyle />
      <AppWindow>
        <TitleBar>
          <Berry s={22} color="#2f97f5" />
          <Title>19957865: BlueberryMarkets-Demo - [US30,H4]</Title>
          <Controls>
            <ControlButton aria-label="Minimize">
              <svg width="16" height="16"><path d="M0 8.500h16" stroke="#000" /></svg>
            </ControlButton>
            <ControlButton aria-label="Maximize">
              <svg width="16" height="16"><path d="M.5.500h15v15H.5z" fill="none" stroke="#000" /></svg>
            </ControlButton>
            <ControlButton aria-label="Close">
              <svg width="16" height="16"><path d="M0 0l16 16M16 0L0 16" stroke="#000" strokeWidth="1.200" /></svg>
            </ControlButton>
          </Controls>
        </TitleBar>

        <MenuBar>
          <Icon s={25}>
            <g fill="#fff" stroke="#5b8fd8" strokeWidth="1.400">
              <path d="M1 2h19v14H1z" />
              <path d="M7 11h18v14H7z" />
            </g>
            <path d="M1 2.500h19M7 11.500h18" stroke="#5b8fd8" strokeWidth="3" strokeDasharray="2 1" />
            <path d="M4 9h3l1-3 2 4M10 17l2 4 2-4 2 4 2-4 1 4" stroke="#4a80d0" strokeWidth="1.400" />
          </Icon>
          <MenuList>
            {["File", "View", "Insert", "Charts", "Tools", "Window", "Help"].map((m) => (
              <button key={m}>{m}</button>
            ))}
          </MenuList>
          <MdiGroup>
            <MdiButton aria-label="Minimize chart">
              <svg width="10" height="10"><path d="M2 8h6" stroke="#6c7a89" strokeWidth="2" /></svg>
            </MdiButton>
            <MdiButton aria-label="Restore chart">
              <svg width="10" height="10">
                <path d="M1 5h5v4H1zM3.500 4V1.500h5v4H7" fill="none" stroke="#6c7a89" strokeWidth="1.400" />
              </svg>
            </MdiButton>
            <MdiButton aria-label="Close chart">
              <svg width="10" height="10"><path d="M1 2l7 7M8 2L1 9" stroke="#6c7a89" strokeWidth="2" /></svg>
            </MdiButton>
          </MdiGroup>
        </MenuBar>

        <ToolRow>
          <ToolBand>
            <Grip />
            <DropTool icon="newChart" />
            <DropTool icon="profiles" />
            <Separator />
            {["market", "target", "navigator", "data", "tester"].map((i) => <Tool key={i} icon={i} />)}
            <Separator />
            <WideButton>{icons.order}New Order</WideButton>
            {["book", "vps", "signal"].map((i) => <Tool key={i} icon={i} />)}
            <WideButton>{icons.auto}AutoTrading</WideButton>
            <Separator />
            <Grip />
            <Tool icon="bars" />
            <Tool icon="candles" $on />
            <Tool icon="line" />
            <Separator />
            {["zoomIn", "zoomOut", "tile"].map((i) => <Tool key={i} icon={i} />)}
            <Separator $wide />
            <Tool icon="scroll" />
            <Tool icon="shift" $on />
            <Separator />
            <DropTool icon="indicators" />
            <DropTool icon="clock" />
            <DropTool icon="template" />
          </ToolBand>
          <RightTools>
            <button aria-label="Search">
              <svg width="22" height="22">
                <circle cx="14" cy="8" r="6" fill="#e4ecfa" stroke="#3b62b8" strokeWidth="2.400" />
                <path d="M10 12l-8 9" stroke="#3b62b8" strokeWidth="4" />
              </svg>
            </button>
            <ChatButton aria-label="Notifications">
              <svg width="22" height="20">
                <path d="M10 2a8 6.500 0 0 1 0 13l-4 3v-4a7 6.500 0 0 1 4-12z" fill="#f8f8fa" stroke="#9a9aa2" strokeWidth="1.500" />
              </svg>
              <Badge>1</Badge>
            </ChatButton>
          </RightTools>
        </ToolRow>

        <ToolRow>
          <ToolBand>
            <Grip />
            <Tool icon="cursor" />
            <Tool icon="cross" $on />
            <Separator />
            {["vline", "hline", "trend", "channel", "fibo"].map((i) => <Tool key={i} icon={i} />)}
            <ToolButton $letter>A</ToolButton>
            <Tool icon="box" />
            <DropTool icon="arrows" />
            <Separator />
            <Grip />
            {["M1", "M5", "M15", "M30", "H1", "H4", "D1", "W1", "MN"].map((t) => (
              <ToolButton key={t} $on={t === "H4"}>{t}</ToolButton>
            ))}
          </ToolBand>
        </ToolRow>

        <ChartArea>
          <Plot>
            <PriceChart />
          </Plot>
          <PriceAxis>
            {prices.map((p) => <Price key={p}>{p}</Price>)}
            <PriceTag $top={70}>35519.46</PriceTag>
            <PriceTag $top={304}>34902.76</PriceTag>
          </PriceAxis>
          <TimeAxis>
            {times.map((t) => <Time key={t}>{t}</Time>)}
            <TimeTag>2021.08.17 1:00</TimeTag>
          </TimeAxis>
        </ChartArea>

        <Tabs>
          <TabList>
            {["XAUUSD,M15", "USOUSD,M15", "US30,M15", "GER30,M15", "US30,H4"].map((t, i) => (
              <Tab key={t} $on={i === 4} $line={i < 3}>{t}</Tab>
            ))}
          </TabList>
          <TabArrows>
            <svg width="6" height="12"><path d="M6 0v12L0 6z" fill="#9a9a9a" /></svg>
            <svg width="6" height="12"><path d="M0 0v12l6-6z" fill="#9a9a9a" /></svg>
          </TabArrows>
        </Tabs>
        <StatusBar>
          <Status $grow>For Help, press F1</Status>
          <Status $w={177}>Default</Status>
          <Status $w={161}>2021.08.17 01:00</Status>
          <Status $w={110}>O: 35586.01</Status>
          <Status>H: 35591.46</Status>
          <Status $w={104}>L: 35516.46</Status>
          <Status>C: 35516.96</Status>
          <Status $w={102}>V: 4549</Status>
          <Status $w={209}>
            <svg width="39" height="26">
              {[0, 1, 2, 3, 4, 5, 6, 7].map((i) => (
                <g key={i}>
                  <rect x={i * 5} y="3" width="4" height={13 - i} fill="#5a7a10" />
                  <rect x={i * 5} y={17 - i} width="4" height="12" fill="#0b3a5a" />
                </g>
              ))}
            </svg>
            82/1 kb
          </Status>
        </StatusBar>
        <Watermark>
          <WatermarkTitle>Activate Windows</WatermarkTitle>
          Go to Settings to activate Windows.
        </Watermark>
      </AppWindow>

      <Taskbar>
        <StartButton aria-label="Start">
          <svg width="24" height="24">
            <path d="M0 3.500L10 2v9.500H0zM11 1.800L24 0v11.500H11zM0 12.500h10V22L0 20.500zM11 12.500h13V24l-13-1.800z" fill="#fff" />
          </svg>
        </StartButton>
        <SearchBox>
          <svg width="25" height="25">
            <circle cx="16" cy="9" r="7.500" fill="none" stroke="#111" strokeWidth="1.800" />
            <path d="M11 15L1 24" stroke="#111" strokeWidth="1.800" />
          </svg>
          <SearchInput placeholder="Type here to search" aria-label="Type here to search" />
        </SearchBox>
        <TaskView aria-label="Task view">
          <svg width="26" height="24" fill="none" stroke="#fff" strokeWidth="1.400">
            <path d="M1 0v4h16V0M1 7h16v10H1zM1 24v-4h16v4M23 0v5M23 12v12" />
            <path d="M21 7h4v3h-4z" fill="#fff" stroke="none" />
          </svg>
        </TaskView>
        <AppButton aria-label="Chat">
          <svg width="36" height="36" fill="none" stroke="#fff" strokeWidth="2">
            <rect width="36" height="36" rx="4" fill="#1e97f2" stroke="none" />
            <path d="M12 36L30 20l6 4v8q0 4-4 4z" fill="#1478cf" stroke="none" />
            <path d="M7 9l3 2 2-3 2 3 3-1-2 4h-6z" fill="#fff" stroke="none" />
            <ellipse cx="16" cy="18" rx="8" ry="6" />
            <path d="M10 23l-1 3 4-2M27 17q4 6-2 9l2 3-5-2q-5 1-8-1" />
            <path d="M12 18h1.500M15.500 18H17M19 18h1.500" />
          </svg>
        </AppButton>
        <AppButton $open aria-label="File Explorer">
          <svg width="32" height="28">
            <path d="M0 2q0-2 2-2h10l3 4H0z" fill="#d99b12" />
            <rect y="3" width="32" height="23" rx="1" fill="#ffd65c" />
            <path d="M5 27V16q0-2 2-2h18q2 0 2 2v11h-6v-6H11v6z" fill="#3a93d8" />
          </svg>
        </AppButton>
        <AppButton $open aria-label="Chrome">
          <svg width="40" height="40" viewBox="0 0 40 40">
            <circle cx="18" cy="18" r="16" fill="#fbc116" />
            <path d="M18 18L4.100 10a16 16 0 0 1 27.800 0z" fill="#e33b2e" />
            <path d="M18 18L4.100 10A16 16 0 0 0 18 34l5-9z" fill="#1e9e4a" />
            <circle cx="18" cy="18" r="7.500" fill="#fff" />
            <circle cx="18" cy="18" r="6" fill="#3b7de8" />
            <circle cx="27" cy="27" r="12" fill="#a53cb5" />
            <text x="27" y="33" fontSize="16" fill="#f0d8f4" textAnchor="middle" fontFamily="Roboto, sans-serif">K</text>
          </svg>
        </AppButton>
        <AppButton $open aria-label="Word">
          <svg width="36" height="32">
            <rect x="8" width="28" height="32" rx="2" fill="#185abd" />
            <path d="M8 8V2q0-2 2-2h24q2 0 2 2v6z" fill="#41a5ee" />
            <path d="M8 8h28v8H8z" fill="#2b7cd3" />
            <path d="M8 24h28v6q0 2-2 2H10q-2 0-2-2z" fill="#103f91" />
            <rect y="7" width="18" height="18" rx="2" fill="#1a56b8" />
            <text x="9" y="21" fontSize="14" fontWeight="700" fill="#fff" textAnchor="middle" fontFamily="Roboto, sans-serif">W</text>
          </svg>
        </AppButton>
        <AppButton $open $on aria-label="MetaTrader">
          <svg width="36" height="36" fill="none" stroke="#0a84ff" strokeWidth="3.500">
            <rect width="36" height="36" fill="#fff" stroke="none" />
            <circle cx="12" cy="18" r="6" />
            <circle cx="24" cy="11" r="6" />
            <circle cx="24" cy="25" r="6" />
          </svg>
        </AppButton>

        <Tray>
          <Weather>
            <svg width="36" height="24" fill="none" stroke="#fff" strokeWidth="2">
              <path d="M1 4q0-3 3-3h27v18q0 4-3 4H4q-3 0-3-3zM31 5h4v15q0 3-4 3" />
              <path d="M6 6h20M17 11h9M17 15h9M17 19h9M7 11h6v7H7z" />
            </svg>
            <span>25°C</span>
            <span>Light rain</span>
          </Weather>
          <TrayIcons>
            <svg width="18" height="10"><path d="M1 9l8-8 8 8" fill="none" stroke="#fff" strokeWidth="1.500" /></svg>
            <svg width="24" height="20">
              <path d="M1 1h20v13H1z" fill="none" stroke="#fff" strokeWidth="1.500" />
              <path d="M3 3h2v9H3z" fill="#fff" />
              <circle cx="16.500" cy="12.500" r="7" fill="#d9202c" />
              <path d="M13.500 9.500l6 6M19.500 9.500l-6 6" stroke="#fff" strokeWidth="1.500" />
            </svg>
            <svg width="20" height="20" fill="none" stroke="#ddd" strokeWidth="1.500">
              <path d="M1 18A17 17 0 0 1 18 1M6 18A12 12 0 0 1 18 6M10 18a8 8 0 0 1 8-7" />
              <circle cx="17" cy="17" r="1.500" fill="#fff" />
            </svg>
            <svg width="24" height="20" fill="none" stroke="#fff" strokeWidth="1.300">
              <path d="M1 7h4l5-5v16l-5-5H1zM13 7q2 3 0 6M16 4q4 6 0 12M19 2q6 8 0 16" />
            </svg>
            <svg width="25" height="18">
              <path d="M6 17a5.500 5.500 0 0 1-1-11 8 8 0 0 1 14-1 6 6 0 0 1 0 12z" fill="#fff" />
              <path d="M8 10a4 4 0 0 1 7-2M16 9a4 4 0 0 1-7 3" fill="none" stroke="#2d2a36" strokeWidth="2" />
            </svg>
          </TrayIcons>
          <Clock>
            <div>2:36 AM</div>
            <div>8/17/2021</div>
          </Clock>
          <ActionCenter aria-label="Notifications">
            <svg width="24" height="23">
              <path d="M0 0h24v17H14l-3 6-3-6H0z" fill="#fff" />
              <path d="M5 5h14M5 9h14M5 13h10" stroke="#555" strokeWidth="1.500" />
            </svg>
            <ActionCount>1</ActionCount>
          </ActionCenter>
        </Tray>
      </Taskbar>
    </Screen>
  );
}
